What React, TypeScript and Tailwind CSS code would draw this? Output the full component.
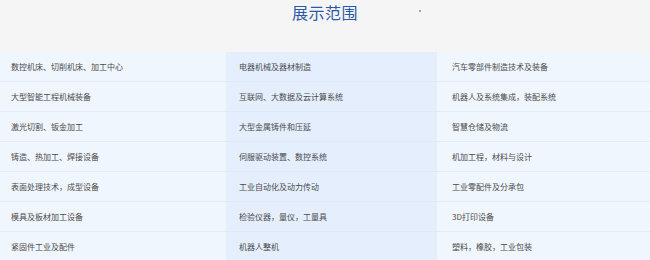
const rows: [string, string, string][] = [
  ["数控机床、切削机床、加工中心", "电器机械及器材制造", "汽车零部件制造技术及装备"],
  ["大型智能工程机械装备", "互联网、大数据及云计算系统", "机器人及系统集成，装配系统"],
  ["激光切割、钣金加工", "大型金属铸件和压延", "智慧仓储及物流"],
  ["铸造、热加工、焊接设备", "伺服驱动装置、数控系统", "机加工程，材料与设计"],
  ["表面处理技术，成型设备", "工业自动化及动力传动", "工业零配件及分承包"],
  ["模具及板材加工设备", "检验仪器，量仪，工量具", "3D打印设备"],
  ["紧固件工业及配件", "机器人整机", "塑料，橡胶，工业包装"],
];

export default function App() {
  return (
    <div className="w-[650px] h-[260px] overflow-hidden bg-[#f5f5f5] font-['Noto_Sans_CJK_SC',sans-serif]">
      {/* Title */}
      <div className="relative h-[52px] flex justify-center">
        <h2 className="text-[16px] leading-[24px] text-[#2b59a8] tracking-[0.5px]">展示范围</h2>
        <span className="absolute left-[419px] top-[10px] w-[2px] h-[2px] rounded-full bg-[#5b8fe0]" />
      </div>

      {/* Table */}
      <div className="grid grid-cols-[226px_211px_1fr] bg-[#f0f6fe]">
        {rows.map((r, i) => (
          <div key={i} className="contents">
            <div className="h-[30px] flex items-center pl-[11px] text-[8px] text-[#4a4a4a] border-b border-[#e6eaf0]">
              {r[0]}
            </div>
            <div className="h-[30px] flex items-center pl-[13px] text-[8px] text-[#4a4a4a] bg-[#e4eefd] border-b border-[#e1e8f3]">
              {r[1]}
            </div>
            <div className="h-[30px] flex items-center pl-[15px] text-[8px] text-[#4a4a4a] border-b border-[#e6eaf0]">
              {r[2]}
            </div>
          </div>
        ))}
      </div>
    </div>
  );
}
